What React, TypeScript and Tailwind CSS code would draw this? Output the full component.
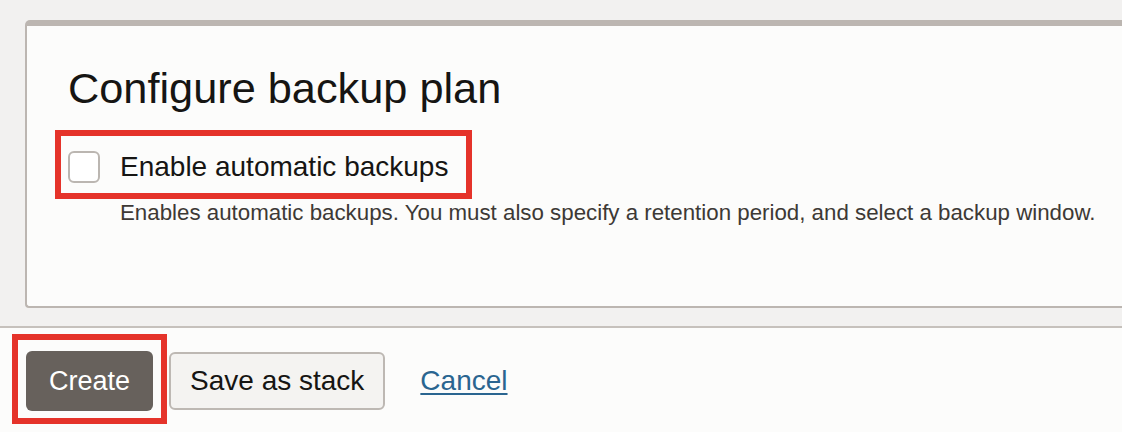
const App = () => {
  return (
    <div className="w-[1122px] h-[432px] overflow-hidden bg-[#f2f1f0] font-['Liberation_Sans',Arial,sans-serif]">
      <div className="pt-[20px] pl-[25px]">
        <div className="-mr-[20px] h-[288px] rounded-tl-[5px] rounded-bl-[4px] border-t-[6px] border-l-2 border-b-2 border-[#bcb6b1] bg-[#fcfcfb] pl-[41px] pt-[38px]">
          <h2 className="text-[43.3px] leading-[48px] text-[#161513]">
            Configure backup plan
          </h2>
          <label className="mt-[18px] -ml-[13px] flex w-fit items-center gap-[20px] border-[6px] border-[#e5332a] pt-[15px] pb-[10px] pl-[7px] pr-[18px]">
            <span className="h-[32px] w-[32px] rounded-[6px] border-2 border-[#bbb6b1] bg-white" />
            <span className="text-[28px] leading-[32px] text-[#161513]">
              Enable automatic backups
            </span>
          </label>
          <p className="ml-[52px] pt-[1px] text-[22.3px] leading-[26px] text-[#3d3935]">
            Enables automatic backups. You must also specify a retention period,
            and select a backup window.
          </p>
        </div>
      </div>
      <div className="mt-[18px] h-[200px] border-t-2 border-[#c6c1bc] bg-[#fcfcfb] pl-[12px] pt-[6px]">
        <div className="flex items-start">
          <div className="border-[6px] border-[#e5332a] pt-[11px] pb-[7px] px-[8px]">
            <button className="h-[60px] rounded-[6px] bg-[#67615c] px-[23px] text-[27px] text-white">
              Create
            </button>
          </div>
          <div className="mt-[18px] flex h-[58px] items-center">
            <button className="ml-[2px] h-[58px] rounded-[6px] border-2 border-[#bdb8b3] bg-[#f4f3f1] px-[19px] text-[28px] text-[#161513]">
              Save as stack
            </button>
            <a
              href="#"
              className="ml-[35px] text-[28px] text-[#2a6590] underline underline-offset-[3px]"
            >
              Cancel
            </a>
          </div>
        </div>
      </div>
    </div>
  );
};

export default App;
